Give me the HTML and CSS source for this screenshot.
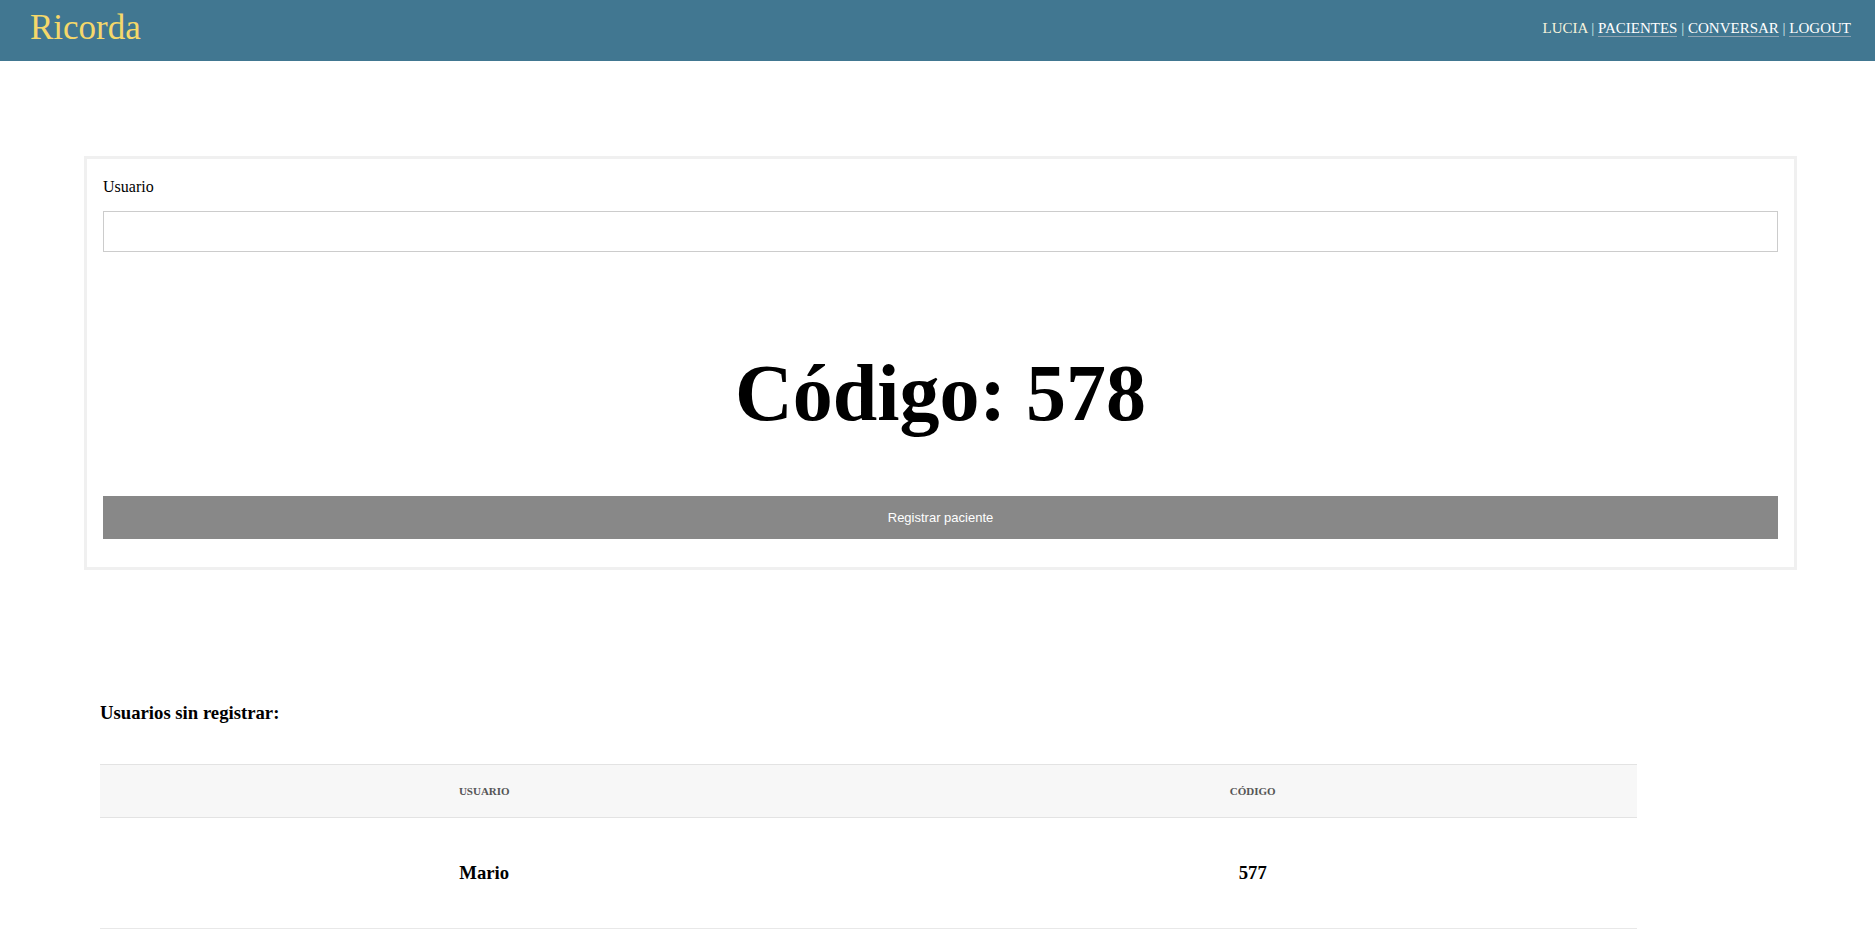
FILE: index.html
```html
<!DOCTYPE html>
<html lang="es">
<head>
<meta charset="utf-8">
<title>Ricorda</title>
<link rel="stylesheet" href="styles.css">
</head>
<body>
<header class="topbar">
  <div class="logo">Ricorda</div>
  <nav class="nav">
    <span class="nav-user">LUCIA</span>
    <span class="sep">|</span>
    <a class="nav-link" href="#">PACIENTES</a>
    <span class="sep">|</span>
    <a class="nav-link" href="#">CONVERSAR</a>
    <span class="sep">|</span>
    <a class="nav-link" href="#">LOGOUT</a>
  </nav>
</header>

<main>
  <form class="card">
    <label class="label" for="usuario">Usuario</label>
    <input class="input" id="usuario" type="text">
    <h1 class="code">Código: 578</h1>
    <button class="btn" type="button">Registrar paciente</button>
  </form>

  <section class="pending">
    <h3 class="pending-title">Usuarios sin registrar:</h3>
    <table class="table">
      <thead>
        <tr>
          <th>Usuario</th>
          <th>Código</th>
        </tr>
      </thead>
      <tbody>
        <tr>
          <td>Mario</td>
          <td>577</td>
        </tr>
      </tbody>
    </table>
  </section>
</main>
</body>
</html>
```

FILE: styles.css
```css
html, body {
  margin: 0;
  padding: 0;
  background: #ffffff;
}

body {
  font-family: "Liberation Serif", "Times New Roman", serif;
  color: #000;
}

.topbar {
  height: 61px;
  box-sizing: border-box;
  background: #417791;
  display: flex;
  align-items: center;
  justify-content: space-between;
  padding: 0 24px 5px 30px;
}

.logo {
  font-size: 35px;
  color: #f5d86a;
  line-height: normal;
}

.nav {
  font-size: 15px;
  color: #f4f1d9;
  white-space: nowrap;
}

.nav-user {
  color: #f6f3dc;
}

.sep {
  color: #d7ecea;
}

.nav-link {
  color: #ffffff;
  text-decoration: none;
  border-bottom: 1px solid #8ea3b1;
}

.card {
  display: flex;
  flex-direction: column;
  box-sizing: border-box;
  width: 1713px;
  margin: 95px 0 0 84px;
  border: 3px solid #f0f0f0;
  padding: 19px 16px 28px 16px;
}

.label {
  font-size: 16px;
  line-height: normal;
}

.input {
  margin: 15px 0 0 0;
  height: 41px;
  box-sizing: border-box;
  border: 1px solid #cccccc;
  padding: 0 8px;
  font-size: 16px;
  outline: none;
}

.code {
  margin: 96px 0 0 0;
  text-align: center;
  font-size: 80px;
  font-weight: bold;
  line-height: normal;
}

.btn {
  margin-top: 57px;
  height: 43px;
  border: none;
  background: #888888;
  color: #ffffff;
  font-family: "Liberation Sans", Arial, sans-serif;
  font-size: 13px;
  cursor: pointer;
}

.pending {
  margin-top: 132px;
  padding-left: 100px;
}

.pending-title {
  margin: 0;
  font-size: 18.72px;
  font-weight: bold;
  line-height: normal;
}

.table {
  margin-top: 40px;
  width: 1537px;
  border-collapse: collapse;
  table-layout: fixed;
}

.table th {
  height: 52px;
  padding: 0;
  background: #f7f7f7;
  border-top: 1px solid #e3e3e3;
  border-bottom: 1px solid #e3e3e3;
  text-transform: uppercase;
  font-size: 11px;
  font-weight: bold;
  color: #555555;
  text-align: center;
  vertical-align: middle;
}

.table td {
  height: 110px;
  padding: 0;
  border-bottom: 1px solid #e8e8e8;
  text-align: center;
  vertical-align: middle;
  font-size: 18.72px;
  font-weight: bold;
}
```
